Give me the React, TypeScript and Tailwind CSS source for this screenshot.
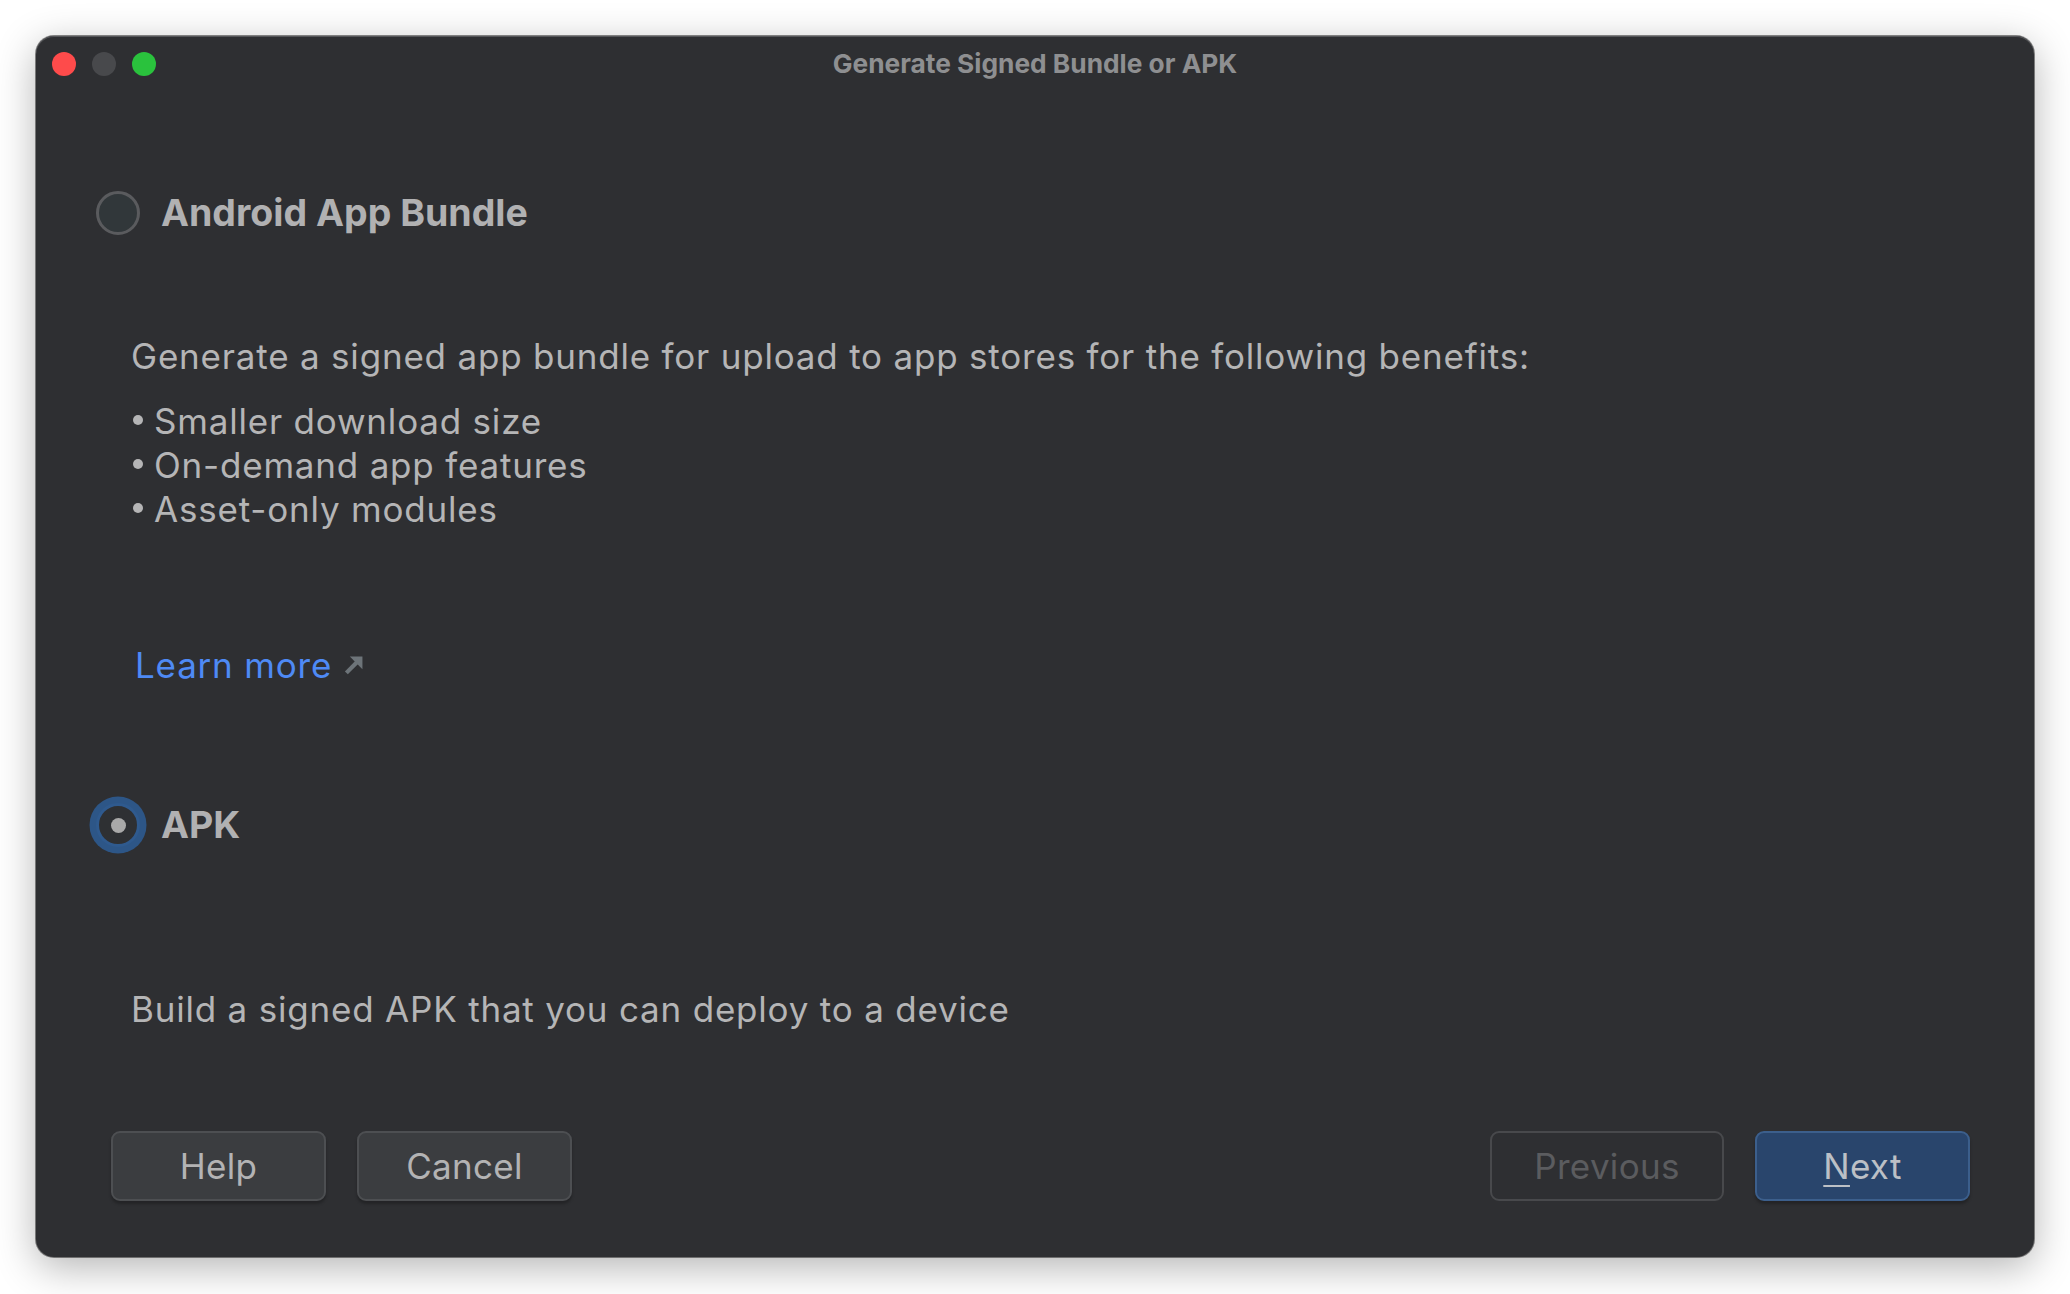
import React from 'react'

function RadioOff() {
  return <div className="w-[44px] h-[44px] shrink-0 rounded-full border-[3px] border-[#5a5b5e] bg-[#31373a]" />
}

function RadioOn() {
  return (
    <div className="w-[44px] h-[44px] shrink-0 rounded-full border-[3px] border-[#2f5a8e] bg-[#2e3033] shadow-[0_0_0_6.5px_#2d5687] flex items-center justify-center">
      <div className="w-[15px] h-[15px] rounded-full bg-[#a9a9a9]" />
    </div>
  )
}

function ArrowUpRight() {
  return (
    <svg className="w-[21px] h-[21px]" viewBox="0 0 20 20" fill="#6d7479">
      <path d="M1.8 15.6 L11.6 5.8 L14.4 8.6 L4.6 18.4 Z" />
      <path d="M6.5 1.5 H18.5 V13.5 Z" />
    </svg>
  )
}

export default function App() {
  const bullets = ['Smaller download size', 'On-demand app features', 'Asset-only modules']

  return (
    <div className="w-screen h-screen bg-white pt-[36px] pb-[37px] px-[36px] font-['Inter',sans-serif]">
      <div className="h-full flex flex-col rounded-[18px] bg-[#2e2f32] shadow-[0_10px_40px_rgba(0,0,0,0.3),0_0_0_1px_rgba(0,0,0,0.45),inset_0_1px_0_#56575a]">
        {/* Title bar */}
        <div className="h-[56px] grid grid-cols-[1fr_auto_1fr] items-center px-4">
          <div className="flex gap-4">
            <span className="w-6 h-6 rounded-full bg-[#fe4b4b]" />
            <span className="w-6 h-6 rounded-full bg-[#48494c]" />
            <span className="w-6 h-6 rounded-full bg-[#2ac23d]" />
          </div>
          <div className="text-[26.3px] font-bold text-[#8e8f91]">Generate Signed Bundle or APK</div>
          <div />
        </div>

        {/* Body */}
        <div className="flex flex-col pl-[60px] text-[35px] leading-[44px] tracking-[0.8px] text-[#b5b5b6]">
          <div className="mt-[99px] flex items-center gap-[21px]">
            <RadioOff />
            <span className="text-[37.5px] font-bold tracking-normal text-[#b1b1b2]">Android App Bundle</span>
          </div>

          <p className="ml-[35px] mt-[99px]">
            Generate a signed app bundle for upload to app stores for the following benefits:
          </p>
          <ul className="ml-[37px] mt-[21px]">
            {bullets.map((b) => (
              <li key={b} className="flex items-center h-[44px]">
                <span className="w-[10px] h-[10px] mr-[11px] mb-[2px] rounded-full bg-[#b5b5b6]" />
                <span>{b}</span>
              </li>
            ))}
          </ul>

          <div className="ml-[39px] mt-[112px] flex items-center gap-[11px]">
            <span className="text-[#4e8af5]">Learn more</span>
            <ArrowUpRight />
          </div>

          <div className="mt-[116px] flex items-center gap-[21px]">
            <RadioOn />
            <span className="text-[37.5px] font-bold tracking-normal text-[#b1b1b2]">APK</span>
          </div>

          <p className="ml-[35px] mt-[140px]">Build a signed APK that you can deploy to a device</p>
        </div>

        {/* Footer */}
        <div className="mt-auto flex items-center justify-between pl-[75px] pr-[64px] pb-[56px] text-[35px] tracking-[0.3px]">
          <div className="flex gap-[31px]">
            <button className="w-[215px] h-[70px] rounded-[9px] border-2 border-[#4d4f52] bg-[#3b3d40] text-[#b3b3b4] shadow-[0_3px_3px_rgba(0,0,0,0.25)]">
              Help
            </button>
            <button className="w-[215px] h-[70px] rounded-[9px] border-2 border-[#4d4f52] bg-[#3b3d40] text-[#b3b3b4] shadow-[0_3px_3px_rgba(0,0,0,0.25)]">
              Cancel
            </button>
          </div>
          <div className="flex gap-[31px]">
            <button className="w-[234px] h-[70px] rounded-[9px] border-2 border-[#48494c] text-[#5b5c5f]">
              Previous
            </button>
            <button className="w-[215px] h-[70px] rounded-[9px] border-2 border-[#3c5f8c] bg-[#29456c] text-[#bcc0c6] shadow-[0_3px_3px_rgba(0,0,0,0.25)]">
              <span className="underline underline-offset-[6px] decoration-2">N</span>ext
            </button>
          </div>
        </div>
      </div>
    </div>
  )
}
